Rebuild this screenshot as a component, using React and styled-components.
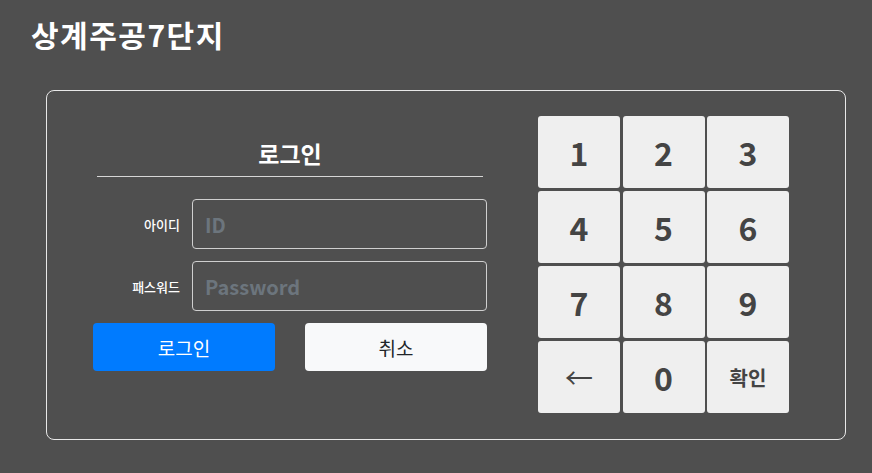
import React from "react";
import styled, { createGlobalStyle } from "styled-components";

const GlobalStyle = createGlobalStyle`
  html, body {
    margin: 0;
    padding: 0;
    background: #4f4f4f;
    font-family: "Noto Sans CJK KR", "Noto Sans", sans-serif;
  }
  * { box-sizing: border-box; }
`;

const Page = styled.div`
  width: 872px;
  height: 473px;
  padding: 9px 26px 0 46px;
  background: #4f4f4f;
`;

const Title = styled.h1`
  margin: 0 0 31px -15px;
  font-size: 30px;
  line-height: 50px;
  letter-spacing: 1.5px;
  font-weight: 700;
  color: #fff;
`;

const Panel = styled.div`
  width: 800px;
  height: 350px;
  border: 1px solid #e8e8e8;
  border-radius: 8px;
  padding: 25px 56px 0 46px;
  display: flex;
  justify-content: space-between;
  align-items: flex-start;
`;

const Form = styled.div`
  width: 394px;
  flex-shrink: 0;
  margin-top: 21px;
  display: flex;
  flex-direction: column;
`;

const Heading = styled.h2`
  margin: 0 4px 22px;
  padding-bottom: 6px;
  border-bottom: 1px solid #d6d6d6;
  text-align: center;
  font-size: 23px;
  line-height: 33px;
  font-weight: 700;
  color: #fff;
`;

const Row = styled.div`
  display: flex;
  align-items: center;
  gap: 12px;
  margin-bottom: 12px;
`;

const Label = styled.label`
  width: 87px;
  flex-shrink: 0;
  white-space: nowrap;
  text-align: right;
  font-size: 13px;
  font-weight: 500;
  color: #fff;
`;

const Input = styled.input`
  flex: 1;
  min-width: 0;
  width: 295px;
  height: 50px;
  background: transparent;
  border: 1px solid #cfcfcf;
  border-radius: 4px;
  padding: 0 12px;
  font-family: inherit;
  font-size: 20px;
  font-weight: 700;
  color: #fff;
  outline: none;
  &::placeholder {
    color: #6c757d;
  }
`;

const Buttons = styled.div`
  display: flex;
  justify-content: space-between;
`;

const Button = styled.button`
  width: 182px;
  height: 48px;
  border: none;
  border-radius: 4px;
  font-family: inherit;
  font-size: 19px;
  background: ${(p) => (p.$primary ? "#007bff" : "#f8f9fa")};
  color: ${(p) => (p.$primary ? "#fff" : "#212529")};
`;

const Keypad = styled.div`
  width: 251px;
  flex-shrink: 0;
  display: grid;
  grid-template-columns: repeat(3, 1fr);
  grid-auto-rows: 72px;
  gap: 3px 2.5px;
`;

const Key = styled.button`
  border: none;
  border-radius: 3px;
  background: #efefef;
  color: #444;
  font-family: inherit;
  font-weight: ${(p) => (p.$light ? 400 : 700)};
  font-size: ${(p) => p.$size || 32}px;
  display: flex;
  align-items: center;
  justify-content: center;
  padding: 0;
`;

const keys = [
  { label: "1" },
  { label: "2" },
  { label: "3" },
  { label: "4" },
  { label: "5" },
  { label: "6" },
  { label: "7" },
  { label: "8" },
  { label: "9" },
  { label: "←", size: 28, light: true },
  { label: "0" },
  { label: "확인", size: 20 },
];

export default function App() {
  return (
    <>
      <GlobalStyle />
      <Page>
        <Title>상계주공7단지</Title>
        <Panel>
          <Form>
            <Heading>로그인</Heading>
            <Row>
              <Label>아이디</Label>
              <Input placeholder="ID" />
            </Row>
            <Row>
              <Label>패스워드</Label>
              <Input type="password" placeholder="Password" />
            </Row>
            <Buttons>
              <Button $primary>로그인</Button>
              <Button>취소</Button>
            </Buttons>
          </Form>
          <Keypad>
            {keys.map((k) => (
              <Key key={k.label} $size={k.size} $light={k.light}>
                {k.label}
              </Key>
            ))}
          </Keypad>
        </Panel>
      </Page>
    </>
  );
}
